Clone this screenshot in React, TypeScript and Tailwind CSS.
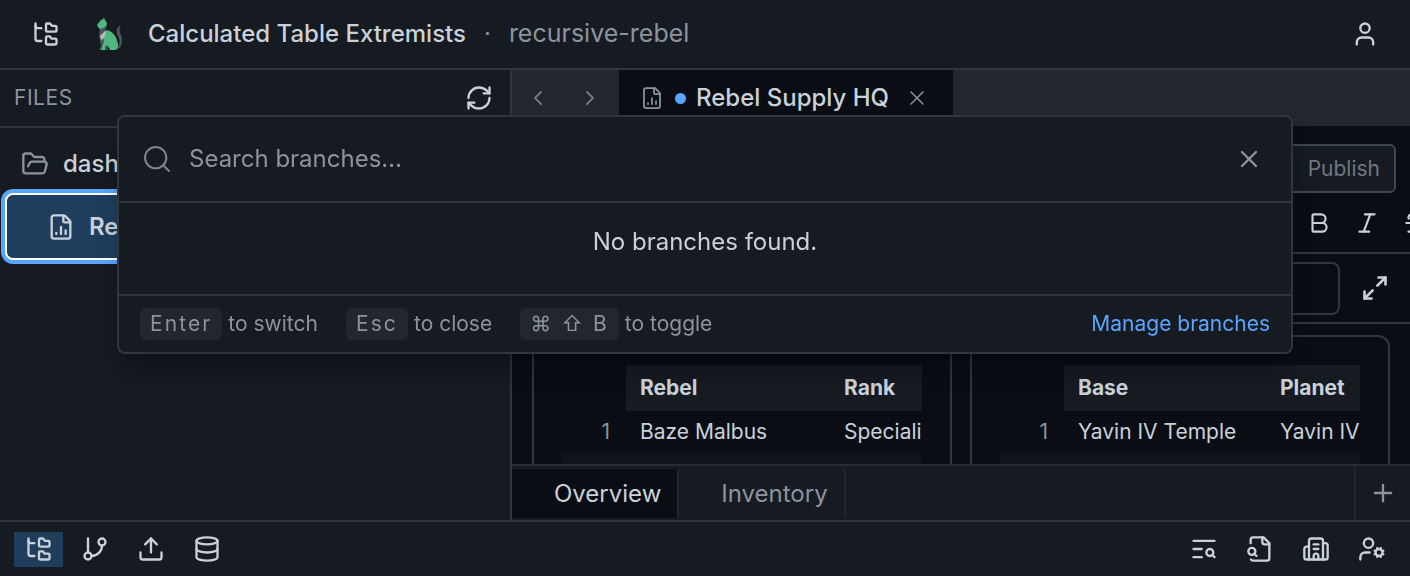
import {
  Bold,
  Building2,
  ChevronLeft,
  ChevronRight,
  Database,
  FileChartColumn,
  FolderOpen,
  FolderTree,
  Italic,
  Maximize2,
  Plus,
  RefreshCw,
  Search,
  Strikethrough,
  TextSearch,
  Upload,
  User,
  UserCog,
  X,
} from "lucide-react"

const tables = [
  { id: "rebels", head: ["Rebel", "Rank"], first: "w-[204px]", row: ["Baze Malbus", "Speciali"] },
  { id: "bases", head: ["Base", "Planet"], first: "w-[202px]", row: ["Yavin IV Temple", "Yavin IV"] },
]

const hints = [
  { keys: ["Enter"], action: "to switch" },
  { keys: ["Esc"], action: "to close" },
  { keys: ["⌘", "⇧", "B"], action: "to toggle" },
]

function CatLogo() {
  return (
    <svg viewBox="0 0 28 34" className="h-[34px] w-7" aria-hidden="true">
      <path d="M8 0 10 4 11 9 9 13 13 16 8 23 10 28 8 32 3 33 5 29 3 18 4 11 2 7Z" fill="#4b555e" />
      <path d="M25 8C20 10 20 15 22 19 25 25 24 29 19 31L20 33C26 31 27 25 25 18 23 14 23 11 25 8Z" fill="#4b555e" />
      <path d="M1 8 5 3 8 2 11 6 10 9 7 11 4 12 2 10Z" fill="#50b77f" />
      <path d="M10 13C16 14 20 18 21 24 23 28 22 32 19 33H14L12 29 10 33H5L8 25 7 20Z" fill="#50b77f" />
      <path d="M9 14 4 19 5 23 8 21 10 15Z" fill="#b5bcc3" />
      <path d="M9 29 12 28 11 31 12 33 9 33Z" fill="#4b555e" />
    </svg>
  )
}

function GitBranchIcon() {
  return (
    <svg viewBox="0 0 24 24" className="size-7" fill="none" stroke="currentColor" strokeWidth="2" strokeLinecap="round" strokeLinejoin="round">
      <path d="M6 3v12" />
      <circle cx="18" cy="6" r="3" />
      <circle cx="6" cy="18" r="3" />
      <path d="M18 9a9 9 0 0 1-9 9" />
    </svg>
  )
}

function FileSearchIcon() {
  return (
    <svg viewBox="0 0 24 24" className="size-7" fill="none" stroke="currentColor" strokeWidth="2" strokeLinecap="round" strokeLinejoin="round">
      <path d="M14 2v4a2 2 0 0 0 2 2h4" />
      <path d="M4.268 21a2 2 0 0 0 1.727 1H18a2 2 0 0 0 2-2V7l-5-5H6a2 2 0 0 0-2 2v3" />
      <path d="m9 18-1.5-1.5" />
      <circle cx="5" cy="14" r="3" />
    </svg>
  )
}

function Header() {
  return (
    <header className="flex h-[70px] shrink-0 items-center border-b-2 border-[#30363d] pr-[31px] pl-8">
      <button aria-label="Toggle files"><FolderTree className="size-7" /></button>
      <a href="#home" aria-label="Home" className="ml-9"><CatLogo /></a>
      <h1 className="ml-6 text-2xl font-medium">Calculated Table Extremists</h1>
      <span className="mx-[18px] text-2xl text-[#8b949e]">·</span>
      <span className="text-[25px] text-[#8b949e]">recursive-rebel</span>
      <button aria-label="Account" className="ml-auto"><User className="size-7" /></button>
    </header>
  )
}

function Sidebar() {
  return (
    <aside className="w-[512px] shrink-0 border-r-2 border-[#30363d]">
      <div className="flex h-[58px] items-center justify-between border-b-2 border-[#30363d] pr-[17px] pl-3.5">
        <h2 className="text-[21px] tracking-wide text-[#8b949e]">FILES</h2>
        <button aria-label="Refresh files"><RefreshCw className="size-7" /></button>
      </div>
      <button className="flex h-[65px] w-full items-center gap-3.5 pt-1.5 pl-[21px] text-2xl font-medium">
        <FolderOpen className="size-7 text-[#8b949e]" strokeWidth={2} />
        dashboards
      </button>
      <button className="mx-[5px] flex h-[67px] w-[500px] items-center gap-3.5 rounded-lg border-2 border-white bg-[#1f3d5c] pl-10 text-2xl font-semibold ring-4 ring-[#58a6ff]">
        <FileChartColumn className="size-7" />
        Rebel Supply HQ
      </button>
    </aside>
  )
}

function TabBar() {
  return (
    <div className="flex h-14 shrink-0 bg-[#22262e]">
      <div className="flex w-[107px] items-center gap-7 px-3.5 text-[#6e7681]">
        <button aria-label="Back"><ChevronLeft className="size-6" /></button>
        <button aria-label="Forward"><ChevronRight className="size-6" /></button>
      </div>
      <div className="flex items-center bg-[#0a0d14] pr-6 pl-[21px]">
        <FileChartColumn className="size-6 text-[#8b949e]" strokeWidth={1.75} />
        <span className="ml-[11px] size-[11px] rounded-full bg-[#58a6ff]" />
        <span className="ml-2.5 text-2xl font-medium">Rebel Supply HQ</span>
        <button aria-label="Close tab" className="ml-4 text-[#8b949e]"><X className="size-6" strokeWidth={1.5} /></button>
      </div>
    </div>
  )
}

function Toolbar() {
  return (
    <>
      <div className="flex justify-end pt-[18px] pr-3.5">
        <button className="h-[49px] rounded-md border-2 border-[#3d474d] bg-[#161a21] pr-3.5 pl-6 text-[21px] text-[#6e7681]">Publish</button>
      </div>
      <div className="flex h-[61px] items-center justify-end gap-[22px] overflow-hidden border-b-2 border-[#30363d]">
        <button aria-label="Bold"><Bold className="size-[26px]" /></button>
        <button aria-label="Italic"><Italic className="size-[26px]" /></button>
        <button aria-label="Strikethrough" className="-mr-[18px]"><Strikethrough className="size-[26px]" /></button>
      </div>
      <div className="flex h-[70px] items-center gap-[21px] border-b-2 border-[#30363d] pr-[21px] pl-5">
        <input aria-label="Formula" className="h-[53px] min-w-0 flex-1 rounded-lg border-2 border-[#30363d] px-4" />
        <button aria-label="Expand formula"><Maximize2 className="size-7" strokeWidth={2.25} /></button>
      </div>
    </>
  )
}

function Cards() {
  return (
    <div className="flex min-h-0 flex-1 gap-[18px] overflow-hidden px-5 pt-[11px]">
      {tables.map((t) => (
        <section key={t.id} className="h-60 min-w-0 flex-1 rounded-xl border-2 border-[#30363d] p-7">
          <table className="w-full table-fixed text-left text-[21px] whitespace-nowrap">
            <thead>
              <tr className="h-[46px]">
                <td className="w-16" />
                <th className={`${t.first} bg-[#161a21] pl-3.5 font-bold`}>{t.head[0]}</th>
                <th className="bg-[#161a21] pl-3.5 font-bold">{t.head[1]}</th>
              </tr>
            </thead>
            <tbody>
              <tr className="h-[42px]">
                <td className="pr-4 text-right text-[#8b949e]">1</td>
                <td className="pl-3.5">{t.row[0]}</td>
                <td className="pl-3.5">{t.row[1]}</td>
              </tr>
              <tr className="h-[42px] bg-[#10141a]">
                <td colSpan={3} />
              </tr>
            </tbody>
          </table>
        </section>
      ))}
    </div>
  )
}

function PageTabs() {
  return (
    <nav className="flex h-14 shrink-0 border-t-2 border-[#282d34] bg-[#161a21] text-2xl">
      <button className="mt-[3px] mb-0.5 border-r-2 border-[#22262e] bg-[#0a0d14] pr-4 pl-[42px]">Overview</button>
      <button className="mt-[3px] mb-0.5 border-r-2 border-[#22262e] pr-4 pl-[42px] text-[#8b949e]">Inventory</button>
      <button aria-label="Add page" className="ml-auto flex w-14 items-center justify-center border-l-2 border-[#22262e] text-[#8b949e]">
        <Plus className="size-7" />
      </button>
    </nav>
  )
}

function StatusBar() {
  return (
    <footer className="flex h-14 shrink-0 items-center justify-between border-t-2 border-[#30363d] px-3.5">
      <div className="flex items-center gap-7">
        <button aria-label="Files" className="flex h-[35px] w-[49px] items-center justify-center bg-[#1f3d5c]"><FolderTree className="size-7" /></button>
        <button aria-label="Branches" className="-ml-2.5"><GitBranchIcon /></button>
        <button aria-label="Upload"><Upload className="size-7" /></button>
        <button aria-label="Connections"><Database className="size-7" /></button>
      </div>
      <div className="flex items-center gap-7 pr-2.5">
        <button aria-label="Search text"><TextSearch className="size-7" /></button>
        <button aria-label="Search files"><FileSearchIcon /></button>
        <button aria-label="Organization"><Building2 className="size-7" /></button>
        <button aria-label="User settings"><UserCog className="size-7" /></button>
      </div>
    </footer>
  )
}

function BranchDialog() {
  return (
    <div className="fixed inset-x-0 top-[115px] flex justify-center px-4">
      <div role="dialog" aria-label="Branches" className="w-full max-w-[1176px] rounded-lg border-2 border-[#30363d] bg-[#161a21] shadow-xl shadow-black/25">
        <div className="flex h-[86px] items-center border-b-2 border-[#30363d] pr-7 pl-[22px]">
          <Search className="size-8 text-[#7d858f]" strokeWidth={1.5} />
          <input
            aria-label="Search branches"
            placeholder="Search branches…"
            className="ml-4 min-w-0 flex-1 text-2xl outline-none placeholder:text-[#8b949e]"
          />
          <button aria-label="Close" className="text-[#8b949e]"><X className="size-7" /></button>
        </div>
        <p className="flex h-[91px] items-center justify-center pb-3.5 text-2xl">No branches found.</p>
        <div className="flex h-[58px] items-center gap-7 border-t-2 border-[#30363d] px-[21px] text-[21px] text-[#8b949e]">
          {hints.map((h) => (
            <span key={h.action} className="flex items-center gap-1.5">
              <kbd className="flex h-8 items-center gap-2 rounded-md bg-[#22262e] px-2.5 font-[Inter,sans-serif] tracking-widest">
                {h.keys.map((k) => <span key={k}>{k}</span>)}
              </kbd>
              {h.action}
            </span>
          ))}
          <a href="#branches" className="ml-auto text-[#58a6ff]">Manage branches</a>
        </div>
      </div>
    </div>
  )
}

export default function App() {
  return (
    <div className="flex h-screen flex-col overflow-hidden bg-[#161a21] font-[Inter,sans-serif] text-[#c9d1d9]">
      <Header />
      <div className="flex min-h-0 flex-1">
        <Sidebar />
        <main className="flex min-w-0 flex-1 flex-col bg-[#0a0d14]">
          <TabBar />
          <Toolbar />
          <Cards />
          <PageTabs />
        </main>
      </div>
      <StatusBar />
      <BranchDialog />
    </div>
  )
}
